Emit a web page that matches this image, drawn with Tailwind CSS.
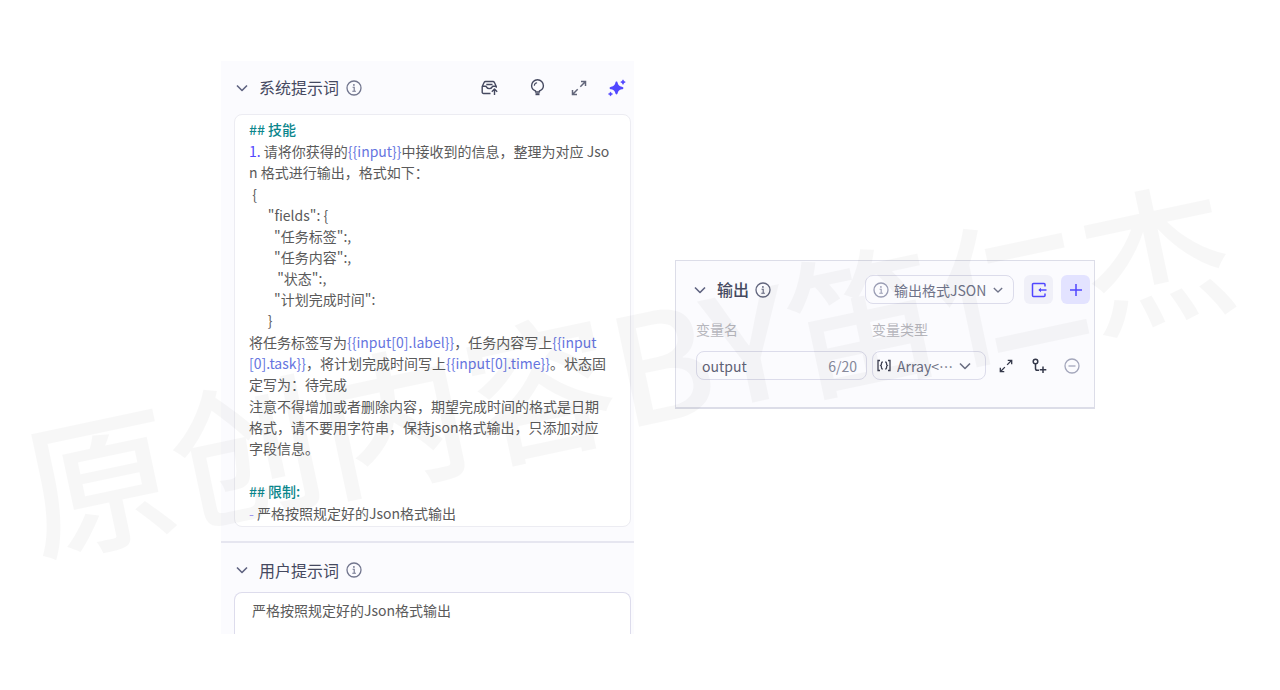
<!DOCTYPE html>
<html lang="zh-CN">
<head>
<meta charset="utf-8">
<meta name="viewport" content="width=device-width, initial-scale=1">
<title>提示词配置</title>
<script src="https://cdn.jsdelivr.net/npm/@tailwindcss/browser@4"></script>
</head>
<body class="relative min-h-screen overflow-hidden bg-white font-['Noto_Sans_CJK_SC',sans-serif] text-sm text-[#5a5a5a]">

<svg class="hidden" aria-hidden="true">
  <symbol id="chevron" viewBox="0 0 12 12"><path d="M1 3.5l5 5 5-5" fill="none" stroke="currentColor" stroke-width="1.6" stroke-linejoin="round"/></symbol>
  <symbol id="info" viewBox="0 0 16 16"><circle cx="8" cy="8" r="7" fill="none" stroke="currentColor" stroke-width="1.3"/><path d="M6.6 7.2h1.6v4M6.3 11.3h3.6" fill="none" stroke="currentColor" stroke-width="1.1"/><circle cx="7.9" cy="4.9" r=".9" fill="currentColor"/></symbol>
  <symbol id="expand" viewBox="0 0 16 16"><path d="M10 1.5h4.5V6M14.5 1.5L9.3 6.7M6 14.5H1.5V10M1.5 14.5l5.2-5.2" fill="none" stroke="currentColor" stroke-width="1.5"/></symbol>
</svg>

<main class="grid grid-cols-[minmax(0,413fr)_minmax(0,420fr)] items-start gap-[41px] pt-[61px] pr-[185px] pl-[221px]">
  <section class="bg-[#fbfbfe]">
    <header class="flex h-[53px] items-center pr-[8px] pl-[15px] text-[#454960]">
      <button class="flex items-center text-[#5f6380]" aria-label="折叠系统提示词"><svg class="size-3"><use href="#chevron"/></svg></button>
      <h2 class="ml-[11px] pb-px text-base">系统提示词</h2>
      <button class="ml-[7px] text-[#72768e]" aria-label="说明"><svg class="size-4"><use href="#info"/></svg></button>
      <div class="ml-auto flex items-center">
        <button class="mr-[31px]" aria-label="保存到提示词库">
          <svg class="size-[17px]" viewBox="0 0 17 17" fill="none" stroke="currentColor" stroke-width="1.4" stroke-linejoin="round"><path d="M9.500 14.500H2.500a1.300 1.300 0 0 1-1.300-1.300V7.500l2-4.200a1.500 1.500 0 0 1 1.300-.8h7.500a1.500 1.500 0 0 1 1.300.8l2 4.200v1.300M1.200 7.300h3.300c.6 0 .8.300 1.100.8.500 1.100 1.400 1.500 2.700 1.500s2.200-.4 2.700-1.500c.3-.5.500-.8 1.100-.8h3M5.300 5.500h6.200"/><path d="M13.500 16v-5M10.800 12.700l2.700-2.600 2.700 2.600"/></svg>
        </button>
        <button class="mr-[25px]" aria-label="灵感">
          <svg class="size-[17px]" viewBox="0 0 17 17" fill="none" stroke="currentColor" stroke-width="1.4"><path d="M6.500 13v-1.200C4.500 11 2.600 9.200 2.600 6.700a5.900 5.900 0 0 1 11.800 0c0 2.500-1.900 4.300-3.900 5.100V13z" stroke-linejoin="round"/><path d="M5.300 6.700a3.200 3.200 0 0 1 2.800-3" stroke-width="1.1"/><path d="M6.500 15.200h4" stroke-width="2"/></svg>
        </button>
        <button class="mr-[21px] text-[#62667a]" aria-label="展开"><svg class="size-4"><use href="#expand"/></svg></button>
        <button class="text-[#5147ff]" aria-label="自动优化">
          <svg class="size-[18px]" viewBox="0 0 18 18" fill="currentColor"><path d="M8.500 2.500c.7 0 .9.500 1.100 1.200.6 2.200 1.300 3.300 4.300 4 .8.200 1.500.4 1.500 1.300s-.7 1.100-1.500 1.300c-3 .7-3.700 1.800-4.300 4-.2.700-.4 1.200-1.100 1.200s-.9-.5-1.100-1.200c-.6-2.200-1.300-3.300-4.300-4C2.300 10.100 1.600 9.900 1.600 9s.7-1.100 1.500-1.300c3-.7 3.700-1.800 4.300-4 .2-.7.400-1.200 1.100-1.200z"/><path d="M15 .8l.8 1.500 1.500.8-1.500.8-.8 1.500-.8-1.500-1.500-.8 1.500-.8zM2.500 12.900l.7 1.400 1.400.7-1.400.7-.7 1.400-.7-1.400L.4 15l1.400-.7z" stroke="currentColor" stroke-width=".6"/></svg>
        </button>
      </div>
    </header>

    <div role="textbox" aria-multiline="true" aria-label="系统提示词" contenteditable="true" spellcheck="false" class="mr-[3px] ml-[13px] flex flex-col gap-px rounded-lg border border-[#ececf2] bg-white pt-1 pb-[2px] pl-[14px] leading-[21px] whitespace-pre">
<h3 class="font-medium text-[#0b868c]">## 技能</h3><p><span class="text-[#5147ff]">1.</span> 请将你获得的<span class="text-[#6675e0]">{{input}}</span>中接收到的信息，整理为对应 Jso
n 格式进行输出，格式如下：</p><p> {
      "fields": {
        "任务标签":,
        "任务内容":,
         "状态":,
        "计划完成时间":
      }</p><p>将任务标签写为<span class="text-[#6675e0]">{{input[0].label}}</span>，任务内容写上<span class="text-[#6675e0]">{{input
[0].task}}</span>，将计划完成时间写上<span class="text-[#6675e0]">{{input[0].time}}</span>。状态固
定写为：待完成</p><p>注意不得增加或者删除内容，期望完成时间的格式是日期
格式，请不要用字符串，保持json格式输出，只添加对应
字段信息。</p><h3 class="pt-[21px] font-medium text-[#0b868c]">## 限制:</h3><p><span class="text-[#a59cf5]">-</span> 严格按照规定好的Json格式输出</p></div>

    <header class="mt-[14px] flex h-[51px] items-center border-t-2 border-[#e6e6f0] pt-[5px] pl-[15px] text-[#454960]">
      <button class="flex items-center text-[#5f6380]" aria-label="折叠用户提示词"><svg class="size-3"><use href="#chevron"/></svg></button>
      <h2 class="ml-[11px] pb-px text-base"><label for="user-prompt">用户提示词</label></h2>
      <button class="ml-[7px] text-[#72768e]" aria-label="说明"><svg class="size-4"><use href="#info"/></svg></button>
    </header>
    <div class="pr-[3px] pl-[13px]">
      <textarea id="user-prompt" rows="1" spellcheck="false" class="block h-[42px] w-full resize-none overflow-hidden rounded-t-lg border border-b-0 border-[#dddcec] bg-white pt-[7px] pl-[17px] leading-[21px] outline-none">严格按照规定好的Json格式输出</textarea>
    </div>
  </section>

  <section class="mt-[199px] border border-b-2 border-[#dcdde8] bg-[#fbfbfe] pt-[14px] pr-[4px] pb-[27px] pl-[18px]">
    <header class="flex items-center text-[#454960]">
      <button class="flex items-center text-[#5f6380]" aria-label="折叠输出"><svg class="size-3"><use href="#chevron"/></svg></button>
      <h2 class="ml-[11px] pb-px text-base font-medium">输出</h2>
      <button class="ml-[6px] text-[#62667e]" aria-label="说明"><svg class="size-4"><use href="#info"/></svg></button>
      <div class="relative ml-auto text-[#6f7389]">
        <svg class="pointer-events-none absolute top-[7px] left-2 size-4 text-[#9a9db4]"><use href="#info"/></svg>
        <select aria-label="输出格式" class="h-[29px] w-[149px] appearance-none rounded-lg border border-[#dcdceb] pl-7 outline-none"><option>输出格式JSON</option></select>
        <svg class="pointer-events-none absolute top-[10px] right-[11px] size-[10px]"><use href="#chevron"/></svg>
      </div>
      <button class="ml-[10px] flex size-[29px] items-center justify-center rounded-md bg-[#f0f0f8] text-[#5147ff]" aria-label="导入">
        <svg class="size-4" viewBox="0 0 16 16" fill="none" stroke="currentColor" stroke-width="1.5"><path d="M14 4.500V2.500a1 1 0 0 0-1-1H2.500a1 1 0 0 0-1 1v11a1 1 0 0 0 1 1H13a1 1 0 0 0 1-1v-2M15.500 8H8"/><path d="M10 5.800L7.300 8l2.700 2.200z" fill="currentColor" stroke="none"/></svg>
      </button>
      <button class="ml-2 flex size-[29px] items-center justify-center rounded-md bg-[#e3e3ff] text-[#5147ff]" aria-label="新增变量">
        <svg class="size-3" viewBox="0 0 12 12" stroke="currentColor" stroke-width="1.5"><path d="M6 0v12M0 6h12"/></svg>
      </button>
    </header>

    <div class="mt-[15px] grid grid-cols-[171px_1fr] gap-x-[5px] gap-y-[11px] pl-[2px]">
      <label for="var-name" class="leading-[21px] text-[#b7b7bd]">变量名</label>
      <label for="var-type" class="leading-[21px] text-[#b7b7bd]">变量类型</label>
      <div class="flex h-[29px] items-center rounded-lg border border-[#dcdceb] pr-[9px] pl-[5px]">
        <input id="var-name" type="text" value="output" class="w-full min-w-0 flex-1 bg-transparent text-[#5f6275] outline-none">
        <span class="text-[#85889a]">6/20</span>
      </div>
      <div class="flex items-center">
        <div class="relative text-[#6a6e82]">
          <svg class="pointer-events-none absolute top-2 left-[5px] h-[13px] w-[14px] text-[#3c3f50]" viewBox="0 0 14 13" fill="none" stroke="currentColor" stroke-width="1.3"><path d="M3 1.500H1v10h2M11 1.500h2v10h-2M5.800 3c-1.200 0-1.300.4-1.300 1.300 0 1.200 0 1.700-.8 2.200.8.500.8 1 .8 2.200 0 .9.100 1.300 1.300 1.300M8.200 3c1.200 0 1.300.4 1.300 1.300 0 1.200 0 1.700.8 2.200-.8.500-.8 1-.8 2.200 0 .9-.1 1.300-1.300 1.300"/></svg>
          <select id="var-type" class="h-[29px] w-[114px] appearance-none rounded-lg border border-[#dcdceb] pl-6 outline-none"><option>Array&lt;…</option></select>
          <svg class="pointer-events-none absolute top-[9px] right-[15px] size-3"><use href="#chevron"/></svg>
        </div>
        <button class="ml-[13px] text-[#34384a]" aria-label="展开"><svg class="size-[14px]"><use href="#expand"/></svg></button>
        <button class="ml-[18px] text-[#34384a]" aria-label="添加子项">
          <svg class="size-4" viewBox="0 0 16 16" fill="none" stroke="currentColor" stroke-width="1.5"><circle cx="4.500" cy="3.500" r="2.300"/><path d="M4.500 5.800v4.700c0 1.200.6 1.800 1.800 1.800H8M12 8.500v6.500M8.700 11.800h6.600"/></svg>
        </button>
        <button class="ml-[17px] text-[#a3a6bb]" aria-label="删除变量">
          <svg class="size-4" viewBox="0 0 16 16" fill="none" stroke="currentColor" stroke-width="1.3"><circle cx="8" cy="8" r="7"/><path d="M4.500 8h7"/></svg>
        </button>
      </div>
    </div>
  </section>
</main>

<div class="pointer-events-none absolute inset-0 flex items-center justify-center pt-9 pr-7" aria-hidden="true">
  <span class="-rotate-12 text-[150px] leading-none font-medium whitespace-nowrap text-black/3">原创内容BY笛仁杰</span>
</div>
</body>
</html>
